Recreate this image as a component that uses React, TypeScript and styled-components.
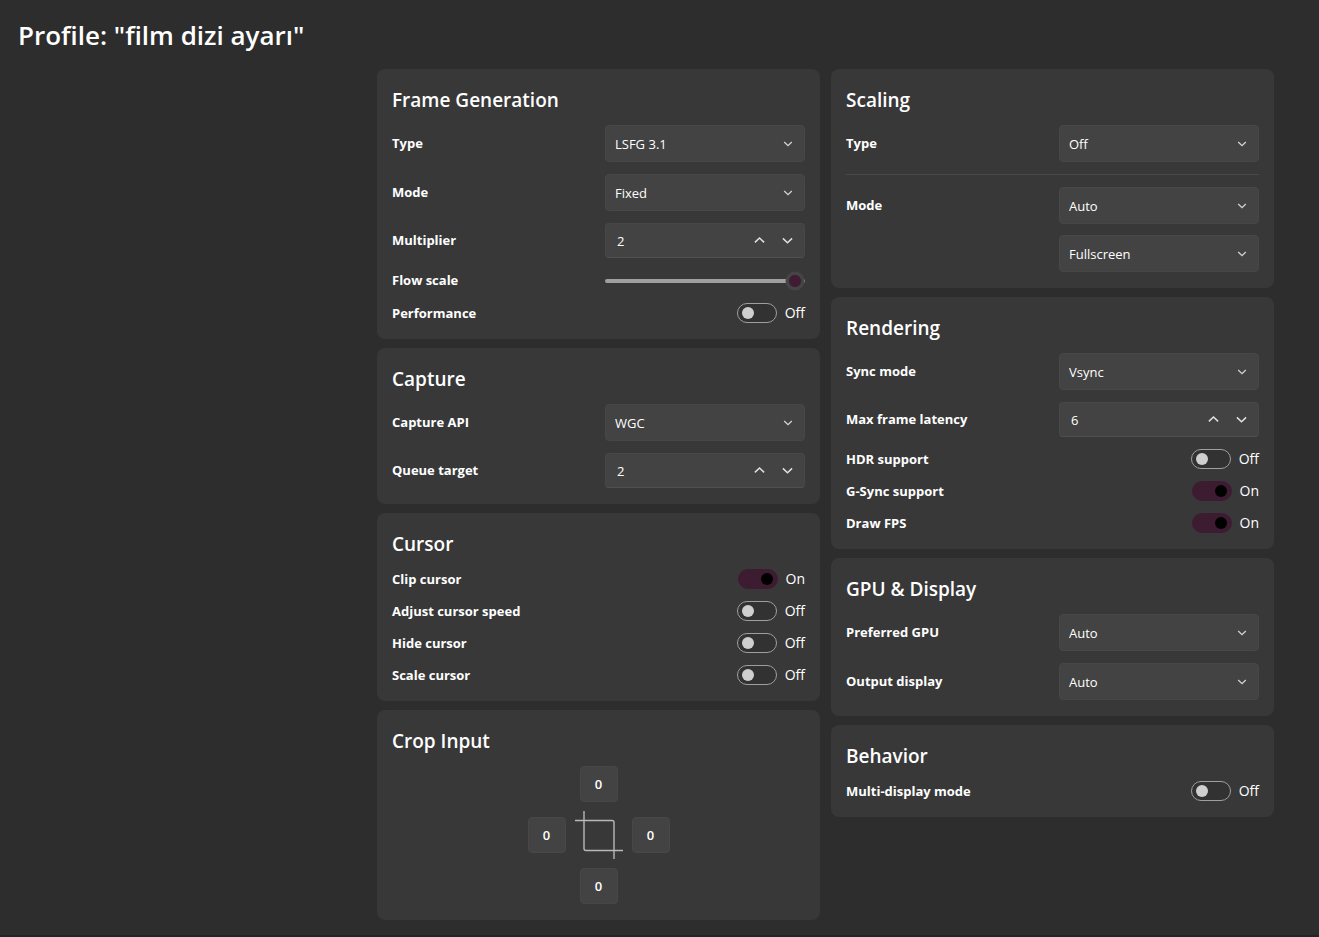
import React, { useId, useState } from 'react';
import styled, { createGlobalStyle } from 'styled-components';

const GlobalStyle = createGlobalStyle`
  *, *::before, *::after { box-sizing: border-box; }
  body {
    margin: 0;
    background: #2d2d2d;
    color: #fff;
    font-family: 'Segoe UI', 'Open Sans', 'Noto Sans', sans-serif;
    font-size: 13px;
    line-height: 20px;
  }
  input, select, button { font: inherit; color: inherit; }
`;

const Page = styled.div`
  min-height: 100vh;
  display: flex;
  flex-direction: column;
  border-bottom: 2px solid #222426;
`;

const Title = styled.h1`
  margin: 0;
  padding: 17px 18px 16px;
  font-size: 26px;
  line-height: 36px;
  font-weight: 600;
`;

const Columns = styled.main`
  display: grid;
  grid-template-columns: 1fr 1fr;
  gap: 11px;
  align-items: start;
  width: 100%;
  max-width: 942px;
  margin-left: auto;
  padding: 0 45px 15px 0;
`;

const Column = styled.div`
  display: flex;
  flex-direction: column;
  gap: 9px;
`;

const Card = styled.section`
  display: flex;
  flex-direction: column;
  gap: 12px;
  padding: 18px 15px 16px;
  border-radius: 8px;
  background: #383838;
`;

const CardTitle = styled.h2`
  margin: 0;
  font-size: 19px;
  line-height: 26px;
  font-weight: 600;
`;

const Row = styled.div`
  display: flex;
  justify-content: space-between;
  align-items: flex-start;
`;

const RowLabel = styled.label<{ $height: number }>`
  font-weight: 700;
  line-height: ${(p) => p.$height}px;
`;

const Stack = styled.div`
  display: flex;
  flex-direction: column;
  gap: 11px;
`;

const Divider = styled.hr`
  width: 100%;
  height: 1px;
  margin: 0;
  border: 0;
  background: #4a4a4a;
`;

const SelectBox = styled.div`
  position: relative;
  width: 200px;
  height: 37px;
`;

const NativeSelect = styled.select`
  appearance: none;
  width: 100%;
  height: 100%;
  padding: 0 36px 0 9px;
  border: 1px solid #474747;
  border-radius: 4px;
  background: #434343;
`;

const SelectArrow = styled.svg`
  position: absolute;
  top: 14px;
  right: 12px;
  pointer-events: none;
`;

const StepperBox = styled.div`
  display: flex;
  align-items: center;
  width: 200px;
  height: 35px;
  padding: 0 3px 0 11px;
  border: 1px solid #474747;
  border-bottom-color: #505050;
  border-radius: 4px;
  background: #434343;
`;

const StepperInput = styled.input`
  flex: 1;
  min-width: 0;
  padding: 0;
  border: 0;
  outline: 0;
  background: transparent;
`;

const StepperButton = styled.button`
  display: grid;
  place-items: center;
  width: 28px;
  height: 28px;
  padding: 0;
  border: 0;
  background: transparent;
`;

const RangeInput = styled.input`
  appearance: none;
  width: 200px;
  height: 21px;
  margin: 0;
  background: transparent;

  &::-webkit-slider-runnable-track {
    height: 4px;
    border-radius: 2px;
    background: #a0a0a0;
  }

  &::-webkit-slider-thumb {
    appearance: none;
    width: 20px;
    height: 20px;
    margin-top: -8px;
    background: radial-gradient(circle closest-side, #3f1c33 56%, #454545 66%, #454545 90%, transparent 98%);
  }
`;

const SwitchBox = styled.div`
  display: flex;
  align-items: center;
  gap: 8px;
`;

const SwitchInput = styled.input`
  appearance: none;
  display: flex;
  align-items: center;
  width: 40px;
  height: 20px;
  margin: 0;
  padding: 0 4px;
  border: 1px solid #9f9f9f;
  border-radius: 10px;
  background: #323232;

  &::before {
    content: '';
    width: 12px;
    height: 12px;
    border-radius: 50%;
    background: #cfcfcf;
  }

  &:checked {
    justify-content: flex-end;
    border-color: #3d1c31;
    background: #3d1c31;
  }

  &:checked::before { background: #000; }
`;

const SwitchState = styled.span`
  font-size: 14px;
  line-height: 22px;
  margin: -1px 0;
`;

const CropGrid = styled.div`
  display: grid;
  grid-template-columns: 38px 48px 38px;
  grid-template-rows: 36px 48px 36px;
  grid-template-areas: '. top .' 'left icon right' '. bottom .';
  gap: 9px;
  place-items: center;
  justify-content: center;
`;

const CropInput = styled.input<{ $area: string }>`
  grid-area: ${(p) => p.$area};
  width: 38px;
  height: 36px;
  padding: 0;
  border: 1px solid #474747;
  border-radius: 4px;
  background: #434343;
  text-align: center;
  font-weight: 600;
`;

const CropIcon = styled.svg`
  grid-area: icon;
`;

function Select({ id, label, value }: { id?: string; label?: string; value: string }) {
  return (
    <SelectBox>
      <NativeSelect id={id} aria-label={label} defaultValue={value}>
        <option>{value}</option>
      </NativeSelect>
      <SelectArrow width="10" height="10" viewBox="0 0 10 10" fill="none" stroke="#d4d4d4" strokeWidth="1.3">
        <path d="M1.2 3 5 6.6 8.8 3" />
      </SelectArrow>
    </SelectBox>
  );
}

function SelectRow({ label, value, extra }: { label: string; value: string; extra?: { label: string; value: string } }) {
  const id = useId();
  return (
    <Row>
      <RowLabel htmlFor={id} $height={37}>{label}</RowLabel>
      <Stack>
        <Select id={id} value={value} />
        {extra && <Select label={extra.label} value={extra.value} />}
      </Stack>
    </Row>
  );
}

function StepperRow({ label, initial }: { label: string; initial: number }) {
  const id = useId();
  const [value, setValue] = useState(initial);
  return (
    <Row>
      <RowLabel htmlFor={id} $height={35}>{label}</RowLabel>
      <StepperBox>
        <StepperInput
          id={id}
          inputMode="numeric"
          value={value}
          onChange={(e) => setValue(Number(e.target.value) || 0)}
        />
        <StepperButton type="button" aria-label={`Increase ${label}`} onClick={() => setValue(value + 1)}>
          <svg width="12" height="12" viewBox="0 0 12 12" fill="none" stroke="#e0e0e0" strokeWidth="1.5">
            <path d="M1.9 7.4 6.5 3 11.1 7.4" />
          </svg>
        </StepperButton>
        <StepperButton type="button" aria-label={`Decrease ${label}`} onClick={() => setValue(value - 1)}>
          <svg width="12" height="12" viewBox="0 0 12 12" fill="none" stroke="#e0e0e0" strokeWidth="1.5">
            <path d="M1.9 3.4 6.5 7.8 11.1 3.4" />
          </svg>
        </StepperButton>
      </StepperBox>
    </Row>
  );
}

function SliderRow({ label }: { label: string }) {
  const id = useId();
  return (
    <Row>
      <RowLabel htmlFor={id} $height={21}>{label}</RowLabel>
      <RangeInput id={id} type="range" min={25} max={100} defaultValue={100} />
    </Row>
  );
}

function SwitchRow({ label, on = false }: { label: string; on?: boolean }) {
  const id = useId();
  const [checked, setChecked] = useState(on);
  return (
    <Row>
      <RowLabel htmlFor={id} $height={20}>{label}</RowLabel>
      <SwitchBox>
        <SwitchInput
          id={id}
          type="checkbox"
          role="switch"
          checked={checked}
          onChange={(e) => setChecked(e.target.checked)}
        />
        <SwitchState>{checked ? 'On' : 'Off'}</SwitchState>
      </SwitchBox>
    </Row>
  );
}

export default function App() {
  return (
    <>
      <GlobalStyle />
      <Page>
        <Title>Profile: "film dizi ayarı"</Title>
        <Columns>
          <Column>
            <Card>
              <CardTitle>Frame Generation</CardTitle>
              <SelectRow label="Type" value="LSFG 3.1" />
              <SelectRow label="Mode" value="Fixed" />
              <StepperRow label="Multiplier" initial={2} />
              <SliderRow label="Flow scale" />
              <SwitchRow label="Performance" />
            </Card>
            <Card>
              <CardTitle>Capture</CardTitle>
              <SelectRow label="Capture API" value="WGC" />
              <StepperRow label="Queue target" initial={2} />
            </Card>
            <Card>
              <CardTitle>Cursor</CardTitle>
              <SwitchRow label="Clip cursor" on />
              <SwitchRow label="Adjust cursor speed" />
              <SwitchRow label="Hide cursor" />
              <SwitchRow label="Scale cursor" />
            </Card>
            <Card>
              <CardTitle>Crop Input</CardTitle>
              <CropGrid>
                <CropInput $area="top" aria-label="Crop top" defaultValue="0" />
                <CropInput $area="left" aria-label="Crop left" defaultValue="0" />
                <CropIcon width="48" height="48" viewBox="0 0 48 48" fill="none" stroke="#b8b8b8" strokeWidth="1.4">
                  <path d="M0 9.5H37a2 2 0 0 1 2 2V48" />
                  <path d="M9 0V37.5a2 2 0 0 0 2 2H48" />
                </CropIcon>
                <CropInput $area="right" aria-label="Crop right" defaultValue="0" />
                <CropInput $area="bottom" aria-label="Crop bottom" defaultValue="0" />
              </CropGrid>
            </Card>
          </Column>
          <Column>
            <Card>
              <CardTitle>Scaling</CardTitle>
              <SelectRow label="Type" value="Off" />
              <Divider />
              <SelectRow label="Mode" value="Auto" extra={{ label: 'Scaling size', value: 'Fullscreen' }} />
            </Card>
            <Card>
              <CardTitle>Rendering</CardTitle>
              <SelectRow label="Sync mode" value="Vsync" />
              <StepperRow label="Max frame latency" initial={6} />
              <SwitchRow label="HDR support" />
              <SwitchRow label="G-Sync support" on />
              <SwitchRow label="Draw FPS" on />
            </Card>
            <Card>
              <CardTitle>GPU &amp; Display</CardTitle>
              <SelectRow label="Preferred GPU" value="Auto" />
              <SelectRow label="Output display" value="Auto" />
            </Card>
            <Card>
              <CardTitle>Behavior</CardTitle>
              <SwitchRow label="Multi-display mode" />
            </Card>
          </Column>
        </Columns>
      </Page>
    </>
  );
}
